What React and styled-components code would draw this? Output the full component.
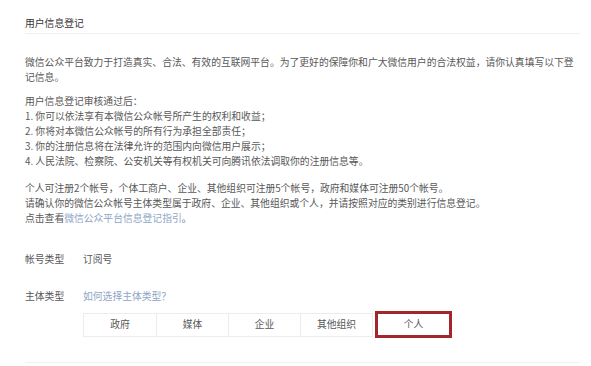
import React from 'react'
import styled, { createGlobalStyle } from 'styled-components'

const GlobalStyle = createGlobalStyle`
  body {
    margin: 0;
    background: #fff;
    font-family: "Noto Sans CJK SC", "Noto Sans", sans-serif;
  }
`

const Page = styled.div`
  width: 555px;
  padding-left: 25px;
  font-size: 9.8px;
  line-height: 15px;
  color: #585858;
`

const Header = styled.div`
  padding-top: 16px;
  padding-bottom: 2px;
  color: #333;
  border-bottom: 1px solid #f0f0f0;
`

const Para = styled.p`
  margin: ${(p) => p.top || 0}px 0 0;
`

const Link = styled.a`
  color: #8ea6c6;
  text-decoration: none;
`

const Row = styled.div`
  display: flex;
  margin-top: ${(p) => p.top || 0}px;
`

const Label = styled.span`
  width: 58px;
  flex-shrink: 0;
`

const Options = styled.div`
  display: flex;
  align-items: center;
  margin: 7px 0 0 58px;
  height: 27px;
`

const Option = styled.div`
  width: ${(p) => (p.first ? 72 : 71)}px;
  height: 22px;
  border: 1px solid #ececec;
  border-left-width: ${(p) => (p.first ? 1 : 0)}px;
  display: flex;
  align-items: center;
  justify-content: center;
`

const Selected = styled.div`
  width: 71px;
  height: 21px;
  margin-left: 2px;
  border: 3px solid #a3262d;
  display: flex;
  align-items: center;
  justify-content: center;
`

const Footer = styled.div`
  margin-top: 24px;
  border-top: 1px solid #f0f0f0;
`

const types = ['政府', '媒体', '企业', '其他组织']

const App = () => {
  return (
    <Page lang="zh-CN">
      <GlobalStyle />
      <Header>用户信息登记</Header>
      <Para top={21}>
        微信公众平台致力于打造真实、合法、有效的互联网平台。为了更好的保障你和广大微信用户的合法权益，请你认真填写以下登记信息。
      </Para>
      <Para top={9}>
        用户信息登记审核通过后：<br />
        1. 你可以依法享有本微信公众帐号所产生的权利和收益；<br />
        2. 你将对本微信公众帐号的所有行为承担全部责任；<br />
        3. 你的注册信息将在法律允许的范围内向微信用户展示；<br />
        4. 人民法院、检察院、公安机关等有权机关可向腾讯依法调取你的注册信息等。
      </Para>
      <Para top={12}>
        个人可注册2个帐号，个体工商户、企业、其他组织可注册5个帐号，政府和媒体可注册50个帐号。<br />
        请确认你的微信公众帐号主体类型属于政府、企业、其他组织或个人，并请按照对应的类别进行信息登记。<br />
        点击查看<Link>微信公众平台信息登记指引</Link>。
      </Para>
      <Row top={26}>
        <Label>帐号类型</Label>
        <span>订阅号</span>
      </Row>
      <Row top={22}>
        <Label>主体类型</Label>
        <Link>如何选择主体类型？</Link>
      </Row>
      <Options>
        {types.map((t, i) => (
          <Option key={t} first={i === 0}>{t}</Option>
        ))}
        <Selected>个人</Selected>
      </Options>
      <Footer />
    </Page>
  )
}

export default App
